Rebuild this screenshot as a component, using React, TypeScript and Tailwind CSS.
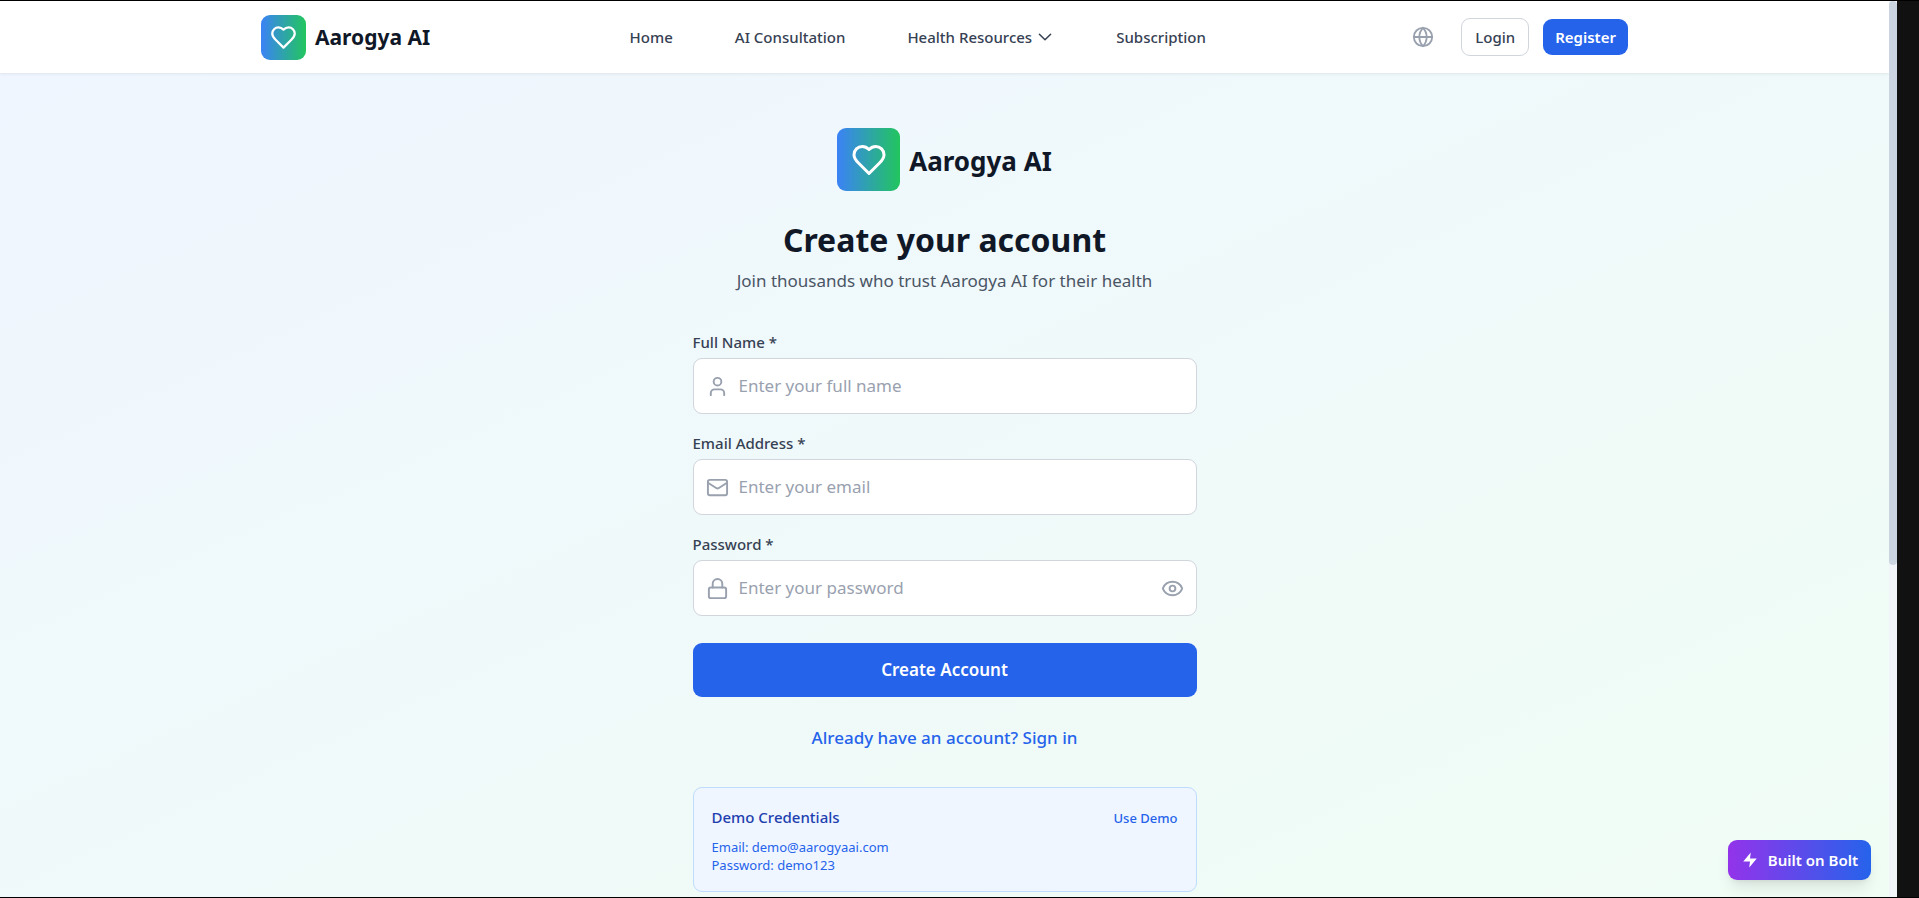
import { useState } from "react";
import type { ReactNode } from "react";
import { Eye, Globe, Lock, Mail, User } from "lucide-react";

function HeartIcon({ className }: { className: string }) {
  return (
    <svg viewBox="0 0 24 24" fill="none" stroke="currentColor" strokeWidth={2} strokeLinecap="round" strokeLinejoin="round" className={className} aria-hidden="true">
      <path d="M19 14c1.49-1.46 3-3.21 3-5.5A5.5 5.5 0 0 0 16.5 3c-1.76 0-3 .5-4.5 2-1.5-1.5-2.74-2-4.5-2A5.5 5.5 0 0 0 2 8.5c0 2.3 1.5 4.05 3 5.5l7 7Z" />
    </svg>
  );
}

function ChevronIcon() {
  return (
    <svg viewBox="0 0 24 24" fill="none" stroke="currentColor" strokeWidth={2} strokeLinecap="round" strokeLinejoin="round" className="size-[18px]" aria-hidden="true">
      <path d="m19.5 8.25-7.5 7.5-7.5-7.5" />
    </svg>
  );
}

function BoltIcon() {
  return (
    <svg viewBox="0 0 24 24" fill="currentColor" className="size-[18px]" aria-hidden="true">
      <polygon points="13 2 3 14 12 14 11 22 21 10 12 10 13 2" />
    </svg>
  );
}

function Header() {
  const link = "text-[15px] leading-6 font-medium text-gray-700";
  return (
    <header className="relative z-10 bg-white shadow-[0_1px_3px_rgba(0,0,0,0.08)]">
      <div className="mx-auto flex h-[72px] max-w-[1367px] items-center justify-between">
        <a href="#home" className="flex items-center gap-[9px]">
          <span className="flex size-[45px] items-center justify-center rounded-[9px] bg-[linear-gradient(to_right,#3b82f6,#22c55e)]">
            <HeartIcon className="size-[27px] text-white" />
          </span>
          <span className="text-[21px] leading-8 font-bold text-gray-900">Aarogya AI</span>
        </a>
        <nav className="flex items-center gap-[62px]">
          <a href="#home" className={link}>Home</a>
          <a href="#consultation" className={link}>AI Consultation</a>
          <button type="button" className="flex items-center gap-1 text-[15px] leading-6 font-medium text-gray-700">
            Health Resources
            <ChevronIcon />
          </button>
          <a href="#subscription" className={link}>Subscription</a>
        </nav>
        <div className="flex items-center">
          <button type="button" aria-label="Language" className="mr-5 p-[7px] text-gray-400">
            <Globe className="size-[22px]" />
          </button>
          <button type="button" className="mr-[14px] rounded-[9px] border border-gray-300 px-[13px] py-1.5 text-[15px] leading-6 font-medium text-gray-700">
            Login
          </button>
          <button type="button" className="rounded-[9px] bg-[#2563eb] px-3 py-1.5 text-[15px] leading-6 font-semibold text-white">
            Register
          </button>
        </div>
      </div>
    </header>
  );
}

type FieldProps = {
  id: string;
  label: string;
  type: string;
  placeholder: string;
  icon: ReactNode;
  action?: ReactNode;
};

function Field({ id, label, type, placeholder, icon, action }: FieldProps) {
  return (
    <div className="flex flex-col gap-1">
      <label htmlFor={id} className="text-[15px] leading-[23px] font-medium text-gray-700">{label}</label>
      <div className="flex h-14 items-center gap-[10px] rounded-[9px] border border-gray-300 bg-white px-3 text-gray-400">
        {icon}
        <input
          id={id}
          type={type}
          placeholder={placeholder}
          className="min-w-0 flex-1 bg-transparent text-[17px] leading-7 text-gray-900 outline-none placeholder:text-gray-400"
        />
        {action}
      </div>
    </div>
  );
}

function SignUp() {
  const [visible, setVisible] = useState(false);
  const icon = "size-[23px] shrink-0";
  return (
    <main className="flex grow flex-col items-center bg-[linear-gradient(to_bottom_right,#eff6ff,#f0fdf4)] px-4 pt-[55px] pb-12">
      <div className="flex w-full max-w-[504px] flex-col">
        <div className="flex items-center justify-center gap-[9px]">
          <span className="flex size-[63px] items-center justify-center rounded-[9px] bg-[linear-gradient(to_right,#3b82f6,#22c55e)]">
            <HeartIcon className="size-9 text-white" />
          </span>
          <span className="pt-0.5 text-[26px] leading-9 font-bold text-gray-900">Aarogya AI</span>
        </div>
        <h1 className="mt-[29px] text-center text-[32px] leading-10 font-bold text-gray-900">Create your account</h1>
        <p className="mt-[7px] text-center text-[17px] leading-7 text-gray-600">
          Join thousands who trust Aarogya AI for their health
        </p>
        <form className="mt-9 flex flex-col" onSubmit={(e) => e.preventDefault()}>
          <div className="flex flex-col gap-[18px]">
            <Field id="name" label="Full Name *" type="text" placeholder="Enter your full name" icon={<User className={icon} />} />
            <Field id="email" label="Email Address *" type="email" placeholder="Enter your email" icon={<Mail className={icon} />} />
            <Field
              id="password"
              label="Password *"
              type={visible ? "text" : "password"}
              placeholder="Enter your password"
              icon={<Lock className={icon} />}
              action={
                <button type="button" aria-label="Show password" onClick={() => setVisible(!visible)}>
                  <Eye className={icon} />
                </button>
              }
            />
          </div>
          <button type="submit" className="mt-[27px] h-[54px] rounded-[9px] bg-[#2563eb] text-[17px] leading-7 font-semibold text-white">
            Create Account
          </button>
        </form>
        <a href="#signin" className="mt-[27px] self-center text-[17px] leading-[27px] font-medium text-[#2563eb]">
          Already have an account? Sign in
        </a>
        <section className="mt-9 rounded-[9px] border border-[#bfdbfe] bg-[#eff6ff] px-[18px] pt-[18px] pb-[17px]">
          <div className="flex items-center justify-between">
            <h2 className="text-[15px] leading-[23px] font-medium text-[#1e40af]">Demo Credentials</h2>
            <button type="button" className="text-[13px] leading-[18px] font-medium text-[#2563eb]">Use Demo</button>
          </div>
          <div className="mt-[9px] text-[13px] leading-[18px] text-[#2563eb]">
            <p>Email: demo@aarogyaai.com</p>
            <p>Password: demo123</p>
          </div>
        </section>
      </div>
    </main>
  );
}

export default function App() {
  return (
    <div className="flex h-screen overflow-hidden border-y border-black bg-[#111111] font-['Noto_Sans',sans-serif]">
      <div className="relative flex min-w-0 flex-1 flex-col overflow-hidden">
        <Header />
        <SignUp />
        <a
          href="#bolt"
          className="absolute right-[18px] bottom-[17px] z-20 flex h-10 items-center gap-[9px] rounded-[9px] bg-[linear-gradient(to_right,#9333ea,#2563eb)] px-[13px] text-[15px] leading-6 font-semibold text-white shadow-lg"
        >
          <BoltIcon />
          Built on Bolt
        </a>
      </div>
      <div className="w-2 bg-[#f1f5f9]">
        <div className="h-[63%] rounded bg-[#cbd5e1]" />
      </div>
      <div className="w-[22px]" />
    </div>
  );
}
